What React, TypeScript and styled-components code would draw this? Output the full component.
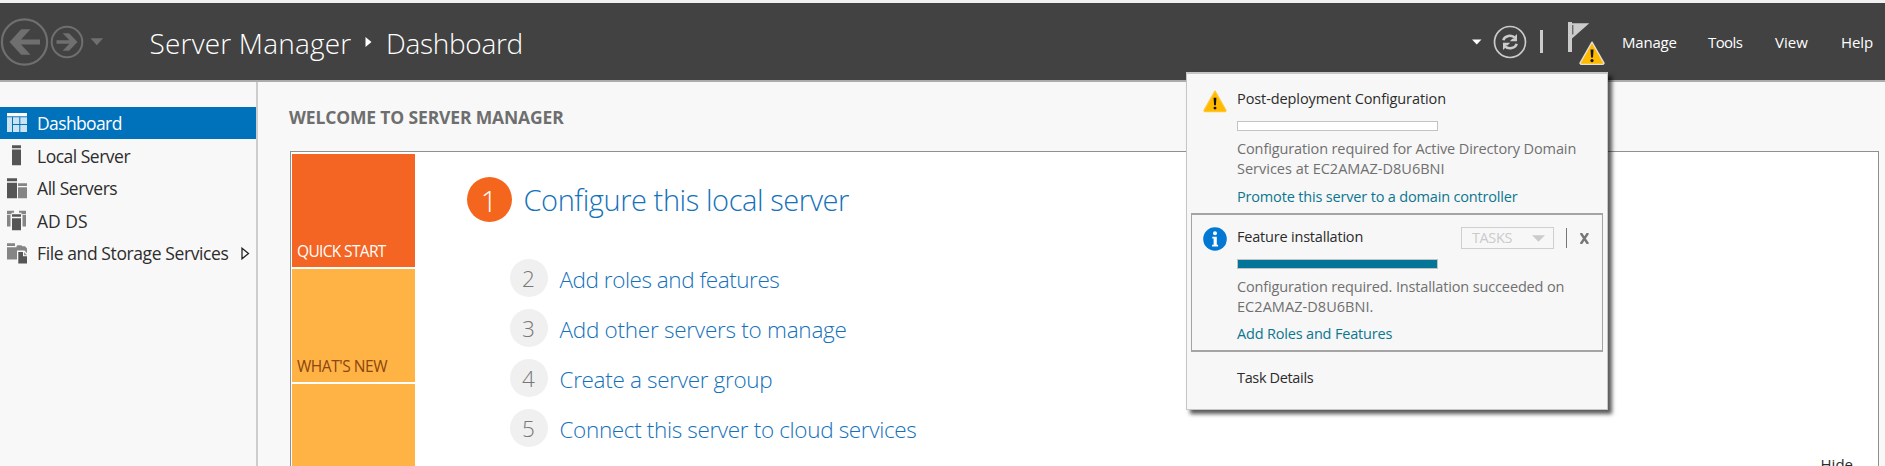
import React from 'react';
import styled, { createGlobalStyle } from 'styled-components';

const GlobalStyle = createGlobalStyle`
  *, *::before, *::after { box-sizing: border-box; }
  body {
    margin: 0;
    overflow: hidden;
    background: #f8f8f8;
    color: #2b2b2b;
    font-family: 'Open Sans', 'Noto Sans', sans-serif;
  }
  svg { display: block; flex: none; }
`;

const Window = styled.div`
  position: relative;
  display: flex;
  flex-direction: column;
  height: 466px;
  border-top: 3px solid #f0f0f0;
  overflow: hidden;
`;

const Label = styled.span<{ $track?: number }>`
  white-space: nowrap;
  letter-spacing: ${(p) => p.$track ?? 0}px;
`;

/* ---------- header ---------- */

const Header = styled.header`
  display: flex;
  align-items: center;
  justify-content: space-between;
  flex: none;
  height: 79px;
  background: #424242;
  border-bottom: 2px solid #acacac;
`;

const HeaderGroup = styled.div`
  display: flex;
  align-items: center;
`;

const Breadcrumb = styled.div`
  display: flex;
  align-items: center;
  margin-left: 44.5px;
  padding-top: 3px;
  color: #fff;
  font-size: 28px;
  font-weight: 300;
  line-height: 38px;
`;

const Crumb = styled(Label)<{ $width: number }>`
  width: ${(p) => p.$width}px;
`;

const CrumbArrow = styled.svg`
  margin: 0 14px 3px 0;
`;

const Separator = styled.span`
  width: 3px;
  height: 23px;
  margin: 0 25px 0 13px;
  background: #cbcbcb;
`;

const FlagButton = styled.div`
  position: relative;
  width: 37px;
  height: 44px;
  padding-top: 2px;
`;

const FlagBadge = styled.div`
  position: absolute;
  left: 10.5px;
  top: 21px;
`;

const MenuBar = styled.nav`
  display: grid;
  grid-template-columns: 86px 67px 66px 44px;
  margin-left: 17px;
  color: #fff;
  font-size: 15px;
  line-height: 20px;
`;

/* ---------- body ---------- */

const Body = styled.div`
  display: flex;
  flex: 1;
  min-height: 0;
`;

const Sidebar = styled.aside`
  width: 258px;
  flex: none;
  padding-top: 25px;
  border-right: 2px solid #cdcdcd;
`;

const NavItem = styled.div<{ $active?: boolean }>`
  display: flex;
  align-items: center;
  height: ${(p) => (p.$active ? 32 : 32.5)}px;
  margin-bottom: ${(p) => (p.$active ? 0.5 : 0)}px;
  padding: 0 6px 0 7px;
  gap: 9px;
  background: ${(p) => (p.$active ? '#0072bc' : 'transparent')};
  color: ${(p) => (p.$active ? '#fff' : '#2d2d2d')};
  font-size: 17.5px;
`;

const Expander = styled.svg`
  margin-left: auto;
`;

const Main = styled.main`
  display: flex;
  flex-direction: column;
  flex: 1;
  padding: 21px 6px 0 32px;
`;

const Heading = styled.h1`
  margin: 0 0 19px -1px;
  color: #6e6e6e;
  font-size: 17.5px;
  font-weight: 700;
  line-height: 29px;
`;

const WelcomeBox = styled.section`
  display: flex;
  height: 340px;
  padding: 1.5px 1px;
  background: #fff;
  border: 1px solid #909090;
`;

const Tiles = styled.div`
  display: flex;
  flex-direction: column;
  gap: 2px;
  width: 123px;
`;

const Tile = styled.div<{ $bg: string; $fg: string }>`
  display: flex;
  align-items: flex-end;
  flex: none;
  height: 113px;
  padding: 0 0 5px 5px;
  background: ${(p) => p.$bg};
  color: ${(p) => p.$fg};
  font-size: 15.5px;
  line-height: 21px;
`;

const Steps = styled.div`
  display: flex;
  flex-direction: column;
  flex: 1;
  padding: 23.5px 0 0 51.5px;
  color: #1471bb;
  font-weight: 300;
`;

const PrimaryStep = styled.div`
  display: flex;
  align-items: center;
  gap: 12px;
  height: 45px;
  margin-bottom: 31px;
  font-size: 29px;
`;

const Step = styled.div`
  display: flex;
  align-items: center;
  gap: 12px;
  height: 50px;
  padding-left: 43px;
  font-size: 22.5px;

  & > span:last-child {
    padding-top: 2px;
  }
`;

const Circle = styled.span<{ $primary?: boolean }>`
  display: flex;
  align-items: center;
  justify-content: center;
  width: ${(p) => (p.$primary ? 45 : 38)}px;
  height: ${(p) => (p.$primary ? 45 : 38)}px;
  padding-top: 1px;
  border-radius: 50%;
  background: ${(p) => (p.$primary ? '#f4661e' : '#f0f0f0')};
  color: ${(p) => (p.$primary ? '#fff' : '#777')};
`;

const HideLink = styled(Label)`
  align-self: flex-start;
  margin: 300px 24px 0 0;
  font-size: 15px;
  line-height: 20px;
`;

/* ---------- notification flyout ---------- */

const Flyout = styled.div`
  position: absolute;
  left: 1186px;
  top: 69px;
  width: 422px;
  height: 338px;
  padding: 0 4px;
  background: #f7f7f7;
  border: 1px solid #c6c6c6;
  border-top-width: 2px;
  box-shadow: 4px 4px 4px rgba(0, 0, 0, 0.65);
  color: #2b2b2b;
  font-size: 14.5px;
  line-height: 20px;
`;

const Notice = styled.div<{ $selected?: boolean }>`
  display: grid;
  grid-template-columns: 34px 1fr;
  height: 139px;
  padding: ${(p) => (p.$selected ? '12px 12px 0 11px' : '15px 12px 0 12px')};
  border: ${(p) => (p.$selected ? '1px solid #a4a4a4' : '0')};
  border-top-width: ${(p) => (p.$selected ? 2 : 0)}px;
  border-bottom-width: ${(p) => (p.$selected ? 2 : 0)}px;

  & > svg {
    margin-top: ${(p) => (p.$selected ? 0 : 1)}px;
  }
`;

const NoticeBody = styled.div`
  display: flex;
  flex-direction: column;
`;

const NoticeHead = styled.div`
  display: flex;
  justify-content: space-between;
  height: 20px;
`;

const Progress = styled.div<{ $done?: boolean }>`
  width: 201px;
  height: 10px;
  margin: 12px 0 8px;
  border: 1px solid #c3c3c3;
  background: ${(p) => (p.$done ? '#027598' : '#fff')};
`;

const Message = styled.div<{ $gap: number }>`
  display: flex;
  flex-direction: column;
  margin-bottom: ${(p) => p.$gap}px;
  color: #707070;
`;

const ActionLink = styled(Label)`
  color: #0b7690;
`;

const Controls = styled.div`
  display: flex;
  align-items: center;
  height: 22px;
`;

const TasksButton = styled.div`
  display: flex;
  align-items: center;
  justify-content: space-between;
  width: 93px;
  height: 22px;
  padding: 0 8px 0 10px;
  border: 1px solid #cfcfcf;
  color: #cbcbcb;
`;

const Divider = styled.span`
  width: 1px;
  height: 20px;
  margin: 0 12px;
  background: #777;
`;

const TaskDetails = styled(Label)`
  display: block;
  margin: 16px 0 0 46px;
`;

const WarningIcon = ({ size = 24, outline = false }: { size?: number; outline?: boolean }) => (
  <svg width={size} height={size * 0.94} viewBox="0 0 26 24.4">
    <path
      d="M13 1.2 25 22.2 24 23.4H2L1 22.2Z"
      fill="#ffba00"
      stroke={outline ? '#e4dfd2' : '#ffc62c'}
      strokeWidth="1.4"
      strokeLinejoin="round"
    />
    <path d="M11.5 8.5h3l-.5 8h-2z" fill="#15130c" />
    <circle cx="13" cy="19.6" r="1.6" fill="#15130c" />
  </svg>
);

const InfoIcon = () => (
  <svg width="24" height="24" viewBox="0 0 24 24">
    <circle cx="12" cy="12" r="11.8" fill="#0078d4" />
    <circle cx="12" cy="6.3" r="2" fill="#fff" />
    <path d="M9.3 9.7h4.5v8h1.3v1.7H9.1v-1.7h1.5v-6.3H9.3z" fill="#fff" />
  </svg>
);

const NavButtons = () => (
  <svg width="105" height="48" viewBox="0 0 105 48" fill="none" stroke="#6f6f6f">
    <circle cx="24.5" cy="24" r="22.6" strokeWidth="2.2" />
    <path d="M9.5 24 21.2 11.2H30.5L21 21.6H40V26.4H21L30.5 36.8H21.2Z" fill="#6f6f6f" stroke="none" />
    <circle cx="67" cy="24" r="15.3" strokeWidth="2" />
    <path d="M77.5 24 69.1 15.2H62.6L69.4 22.3H56.5V25.7H69.4L62.6 32.8H69.1Z" fill="#6f6f6f" stroke="none" />
    <path d="M90.5 20.3h12.6l-6.3 7z" fill="#6f6f6f" stroke="none" />
  </svg>
);

const RefreshIcon = () => (
  <svg width="34" height="34" viewBox="0 0 34 34" fill="none" stroke="#cbcbcb">
    <circle cx="17" cy="17" r="15.5" strokeWidth="1.7" />
    <path d="M10.3 15.2c1.2-4.6 8.2-6 12-2.2" strokeWidth="2.5" />
    <path d="M24 9v7.2h-7.2l2.5-2.4 2.2-.3.2-2.2z" fill="#cbcbcb" stroke="none" />
    <path d="M23.7 18.8c-1.2 4.6-8.2 6-12 2.2" strokeWidth="2.5" />
    <path d="M10 25v-7.2h7.2l-2.5 2.4-2.2.3-.2 2.2z" fill="#cbcbcb" stroke="none" />
  </svg>
);

const FlagIcon = () => (
  <svg width="22" height="31" viewBox="0 0 22 31">
    <path d="M0 0h4v30H0z" fill="#cbcbcb" />
    <path d="M4 1.2h17.3L4 16.5z" fill="#cbcbcb" />
    <path d="M4.8 3v9.5" stroke="#424242" strokeWidth="1" />
  </svg>
);

const DashboardIcon = () => (
  <svg width="21" height="20" viewBox="0 0 21 20">
    <path d="M0 0h20v3.3H0z" fill="#fff" />
    <path d="M0 4.3h5V19H0zM6 4.3h6.3V11H6zM13.3 4.3H20V11h-6.7zM6 12h6.3v7H6zM13.3 12H20v7h-6.7z" fill="#cce3f2" />
  </svg>
);

const ServerIcon = () => (
  <svg width="21" height="21" viewBox="0 0 21 21">
    <path d="M5 .3h9v2.9H5zM5 4.5h9v15.8H5z" fill="#555" />
  </svg>
);

const ServersIcon = () => (
  <svg width="21" height="21" viewBox="0 0 21 21">
    <path d="M0 .3h10v2.9H0zM0 4.8h10v15.5H0z" fill="#555" />
    <path d="M11 5.3h9v2.6h-9zM11 9.2h9v11.1h-9z" fill="#858585" />
  </svg>
);

const DomainIcon = () => (
  <svg width="21" height="21" viewBox="0 0 21 21">
    <path d="M0 .8h7v2H4.5v1.5H0zM0 5h3.5v11.5H0zM12 .8h7v3.5h-4.5V2.8H12zM15.5 5H19v11.5h-3.5z" fill="#858585" />
    <path d="M5 4.3h9v2.5H5zM5 8.3h9v12H5z" fill="#555" />
  </svg>
);

const StorageIcon = () => (
  <svg width="21" height="21" viewBox="0 0 21 21">
    <path d="M0 .3h8v2.8H0zM0 4.3h9.5V3.2l1-1h3.8l1 1H18l2 2.2v4.800l-2.5-2.6H10v8.9H0z" fill="#858585" />
    <path d="M11.3 9h4.7v4.2h4V20.5h-8.7z" fill="#555" />
    <path d="M17 8.9l3.2 3.3H17z" fill="#999" />
  </svg>
);

const navItems = [
  { label: 'Dashboard', track: -0.62, icon: <DashboardIcon />, active: true },
  { label: 'Local Server', track: -0.5, icon: <ServerIcon /> },
  { label: 'All Servers', track: -0.44, icon: <ServersIcon /> },
  { label: 'AD DS', track: 0, icon: <DomainIcon /> },
  { label: 'File and Storage Services', track: -0.4, icon: <StorageIcon />, expandable: true },
];

const steps = [
  { n: 2, label: 'Add roles and features', track: -0.45 },
  { n: 3, label: 'Add other servers to manage', track: -0.26 },
  { n: 4, label: 'Create a server group', track: -0.33 },
  { n: 5, label: 'Connect this server to cloud services', track: -0.35 },
];

export default function App() {
  return (
    <>
      <GlobalStyle />
      <Window>
        <Header>
          <HeaderGroup>
            <NavButtons />
            <Breadcrumb>
              <Crumb $track={0.2} $width={215.5}>Server Manager</Crumb>
              <CrumbArrow width="7" height="10" viewBox="0 0 7 10">
                <path d="M.5 0 6.5 5 .5 10z" fill="#fff" />
              </CrumbArrow>
              <Crumb $track={-0.3} $width={140}>Dashboard</Crumb>
            </Breadcrumb>
          </HeaderGroup>
          <HeaderGroup>
            <svg width="21" height="6" viewBox="0 0 21 6">
              <path d="M0 .5h9.5L4.75 5.5z" fill="#fff" />
            </svg>
            <RefreshIcon />
            <Separator />
            <FlagButton>
              <FlagIcon />
              <FlagBadge>
                <WarningIcon size={26} outline />
              </FlagBadge>
            </FlagButton>
            <MenuBar>
              <Label $track={-0.2}>Manage</Label>
              <Label $track={-0.6}>Tools</Label>
              <Label>View</Label>
              <Label $track={-0.1}>Help</Label>
            </MenuBar>
          </HeaderGroup>
        </Header>

        <Body>
          <Sidebar>
            {navItems.map((item) => (
              <NavItem key={item.label} $active={item.active}>
                {item.icon}
                <Label $track={item.track}>{item.label}</Label>
                {item.expandable && (
                  <Expander width="9" height="13" viewBox="0 0 9 13">
                    <path d="M1 1.2 7.5 6.5 1 11.8z" fill="none" stroke="#222" strokeWidth="1.3" />
                  </Expander>
                )}
              </NavItem>
            ))}
          </Sidebar>
          <Main>
            <Heading>
              <Label $track={-0.15}>WELCOME TO SERVER MANAGER</Label>
            </Heading>
            <WelcomeBox>
              <Tiles>
                <Tile $bg="#f46523" $fg="#fff">
                  <Label $track={-0.65}>QUICK START</Label>
                </Tile>
                <Tile $bg="#ffb344" $fg="#8a4510">
                  <Label $track={-0.45}>WHAT'S NEW</Label>
                </Tile>
                <Tile $bg="#ffb344" $fg="#8a4510" />
              </Tiles>
              <Steps>
                <PrimaryStep>
                  <Circle $primary>1</Circle>
                  <Label $track={-0.42}>Configure this local server</Label>
                </PrimaryStep>
                {steps.map((s) => (
                  <Step key={s.n}>
                    <Circle>{s.n}</Circle>
                    <Label $track={s.track}>{s.label}</Label>
                  </Step>
                ))}
              </Steps>
              <HideLink>Hide</HideLink>
            </WelcomeBox>
          </Main>
        </Body>

        <Flyout>
          <Notice>
            <WarningIcon />
            <NoticeBody>
              <NoticeHead>
                <Label $track={-0.09}>Post-deployment Configuration</Label>
              </NoticeHead>
              <Progress />
              <Message $gap={8}>
                <Label $track={-0.12}>Configuration required for Active Directory Domain</Label>
                <Label $track={0}>Services at EC2AMAZ-D8U6BNI</Label>
              </Message>
              <ActionLink $track={-0.17}>Promote this server to a domain controller</ActionLink>
            </NoticeBody>
          </Notice>
          <Notice $selected>
            <InfoIcon />
            <NoticeBody>
              <NoticeHead>
                <Label $track={-0.2}>Feature installation</Label>
                <Controls>
                  <TasksButton>
                    <Label $track={-0.4}>TASKS</Label>
                    <svg width="13" height="7" viewBox="0 0 13 7">
                      <path d="M0 .3h13L6.5 6.7z" fill="#cbcbcb" />
                    </svg>
                  </TasksButton>
                  <Divider />
                  <svg width="11" height="11" viewBox="0 0 11 11">
                    <path d="M1.8 0 9 11M9 0 1.8 11" stroke="#777" strokeWidth="2.4" />
                  </svg>
                </Controls>
              </NoticeHead>
              <Progress $done />
              <Message $gap={7}>
                <Label $track={-0.14}>Configuration required. Installation succeeded on</Label>
                <Label $track={0.05}>EC2AMAZ-D8U6BNI.</Label>
              </Message>
              <ActionLink $track={-0.18}>Add Roles and Features</ActionLink>
            </NoticeBody>
          </Notice>
          <TaskDetails $track={-0.35}>Task Details</TaskDetails>
        </Flyout>
      </Window>
    </>
  );
}
